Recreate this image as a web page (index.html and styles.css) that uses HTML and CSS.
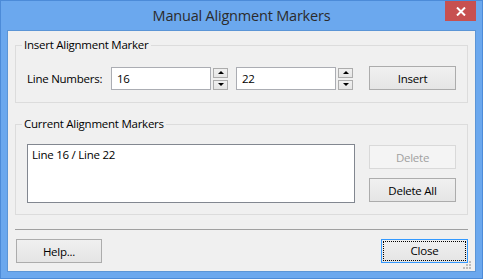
FILE: index.html
```html
<!DOCTYPE html>
<html lang="en">
<head>
    <meta charset="UTF-8">
    <title>Manual Alignment Markers</title>
    <link rel="stylesheet" href="styles.css">
</head>
<body>
    <div class="window">
        <div class="titlebar">
            <span class="title">Manual Alignment Markers</span>
            <button class="close-x" type="button">
                <svg width="10" height="9" viewBox="0 0 10 9"><path d="M1 0.5 L9 8.5 M9 0.5 L1 8.5" stroke="#fff" stroke-width="2"/></svg>
            </button>
        </div>
        <div class="client">
            <fieldset class="group insert-group">
                <legend>Insert Alignment Marker</legend>
                <div class="row">
                    <label class="line-label">Line Numbers:</label>
                    <input class="num" type="text" value="16">
                    <div class="spin">
                        <span class="spin-btn"><i class="tri up"></i></span>
                        <span class="spin-btn"><i class="tri down"></i></span>
                    </div>
                    <input class="num second" type="text" value="22">
                    <div class="spin">
                        <span class="spin-btn"><i class="tri up"></i></span>
                        <span class="spin-btn"><i class="tri down"></i></span>
                    </div>
                    <button class="btn push-right" type="button">Insert</button>
                </div>
            </fieldset>

            <fieldset class="group markers-group">
                <legend>Current Alignment Markers</legend>
                <div class="row top">
                    <div class="listbox">
                        <div class="list-item">Line 16 / Line 22</div>
                    </div>
                    <div class="side-buttons">
                        <button class="btn" type="button" disabled>Delete</button>
                        <button class="btn" type="button">Delete All</button>
                    </div>
                </div>
            </fieldset>

            <div class="separator"></div>

            <div class="footer">
                <button class="btn help" type="button">Help...</button>
                <button class="btn focused" type="button"><span class="focus-ring">Close</span></button>
            </div>

            <!-- size grip -->
            <svg class="grip" width="9" height="9" viewBox="0 0 9 9">
                <rect x="6" y="0" width="2" height="2" fill="#bcbcbc"/>
                <rect x="3" y="3" width="2" height="2" fill="#bcbcbc"/>
                <rect x="6" y="3" width="2" height="2" fill="#bcbcbc"/>
                <rect x="0" y="6" width="2" height="2" fill="#bcbcbc"/>
                <rect x="3" y="6" width="2" height="2" fill="#bcbcbc"/>
                <rect x="6" y="6" width="2" height="2" fill="#bcbcbc"/>
            </svg>
        </div>
    </div>
</body>
</html>
```

FILE: styles.css
```css
* {
    box-sizing: border-box;
}
body {
    margin: 0;
    font-family: "Segoe UI", "Open Sans", sans-serif;
    font-size: 11.5px;
    letter-spacing: -0.25px;
    color: #000;
}
.window {
    width: 483px;
    height: 279px;
    background-color: #6ba8ee;
    border: 1px solid #4c8bd8;
    padding: 0 6px 6px;
    display: flex;
    flex-direction: column;
}
.titlebar {
    height: 29px;
    margin: 0 -6px;
    display: grid;
    grid-template-columns: 1fr auto 1fr;
}
.title {
    grid-column: 2;
    font-size: 14.5px;
    letter-spacing: -0.2px;
    line-height: 30px;
    color: #2b2b2b;
}
.close-x {
    grid-column: 3;
    justify-self: end;
    align-self: start;
    width: 31px;
    height: 20px;
    margin-right: 6px;
    padding: 0;
    border: none;
    background-color: #c75050;
    display: flex;
    align-items: center;
    justify-content: center;
}
.client {
    flex: 1;
    position: relative;
    background-color: #f0f0f0;
    border: 1px solid #5b95d6;
    display: flex;
    flex-direction: column;
}

/* group boxes */
.group {
    margin: 6px 7px 0;
    min-width: 0;
    border: 1px solid #dcdcdc;
    padding: 13px 11px 12px;
}
.group legend {
    padding: 0 2px;
    margin-left: -5px;
    line-height: 16px;
}
.markers-group {
    margin-top: 13px;
    padding-top: 12px;
    padding-bottom: 11px;
}
.row {
    display: flex;
    align-items: center;
}
.row.top {
    align-items: flex-start;
}
.line-label {
    width: 84px;
}
.num {
    width: 100px;
    height: 23px;
    border: 1px solid #abadb3;
    padding: 0 5px;
    font: inherit;
    letter-spacing: inherit;
    color: #000;
    background: #fff;
    outline: none;
}
.num.second {
    margin-left: 8px;
}
.spin {
    width: 15px;
    height: 23px;
    margin-left: 2px;
    padding-top: 1px;
    display: flex;
    flex-direction: column;
    gap: 2px;
}
.spin-btn {
    height: 10px;
    border: 1px solid #acacac;
    background: linear-gradient(#f0f0f0, #e5e5e5);
    display: flex;
    align-items: center;
    justify-content: center;
}
.tri {
    width: 0;
    height: 0;
    border-left: 3px solid transparent;
    border-right: 3px solid transparent;
}
.tri.up {
    border-bottom: 3px solid #000;
}
.tri.down {
    border-top: 3px solid #000;
}

/* push buttons */
.btn {
    width: 87px;
    height: 24px;
    padding: 0;
    border: 1px solid #acacac;
    background: linear-gradient(#f0f0f0, #e5e5e5);
    font: inherit;
    letter-spacing: inherit;
    color: #000;
}
.btn:disabled {
    border-color: #d9d9d9;
    background: #f4f4f4;
    color: #a0a0a0;
}
.push-right {
    margin-left: auto;
}
.listbox {
    width: 328px;
    height: 59px;
    border: 1px solid #828790;
    background: #fff;
    padding: 2px 4px;
}
.side-buttons {
    margin-left: auto;
    margin-top: 1px;
    display: flex;
    flex-direction: column;
    gap: 9px;
}
.separator {
    margin: 14px 7px 0;
    border-top: 1px solid #a0a0a0;
}
.footer {
    margin: 9px 7px 0 8px;
    display: flex;
    justify-content: space-between;
}
.help {
    width: 86px;
}
.focused {
    border-color: #3399ff;
    padding: 1px;
}
.focus-ring {
    display: block;
    height: 100%;
    border: 1px dotted #000;
    line-height: 18px;
}
.grip {
    position: absolute;
    right: 3px;
    bottom: 1px;
}
```
